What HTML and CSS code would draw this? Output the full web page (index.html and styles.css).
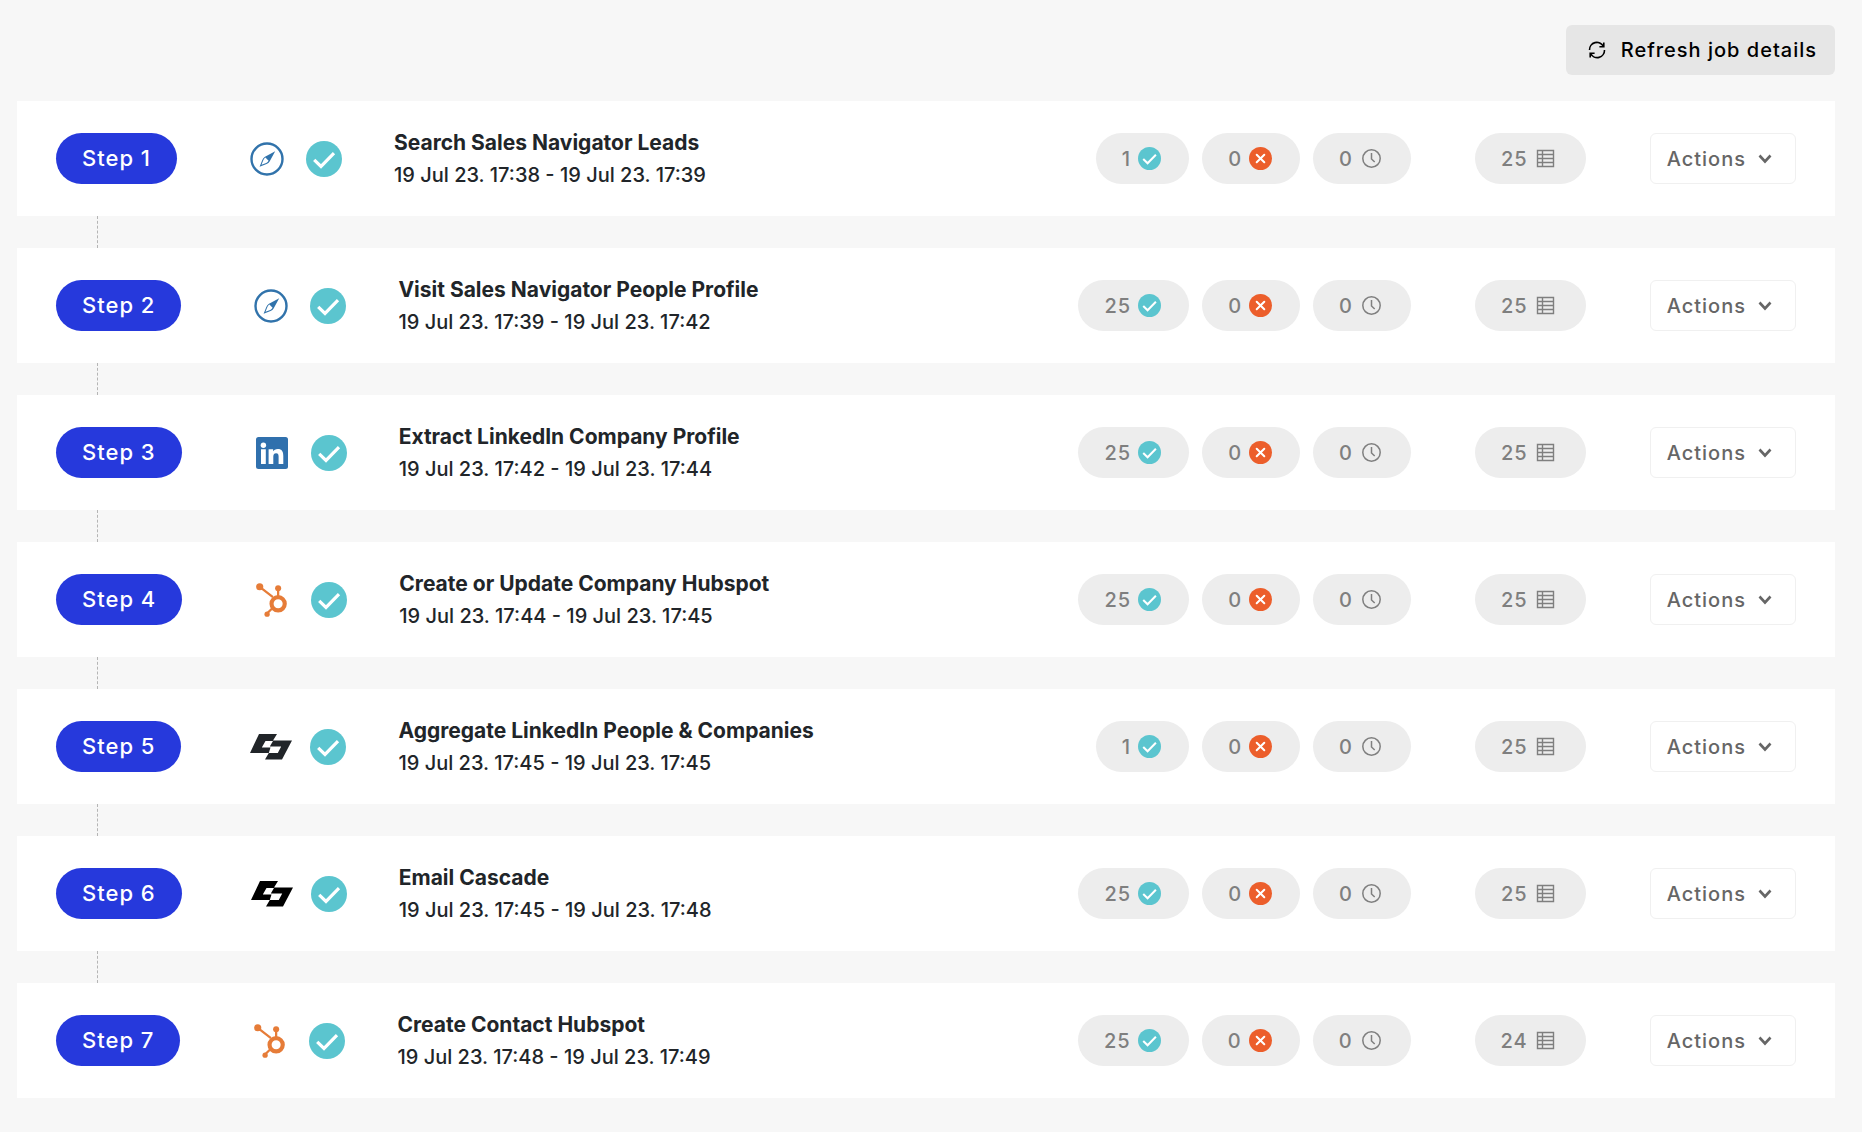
FILE: index.html
```html
<!DOCTYPE html>
<html lang="en">
<head>
  <meta charset="UTF-8">
  <meta name="viewport" content="width=device-width, initial-scale=1.0">
  <title>Job details</title>
  <link rel="stylesheet" href="styles.css">
</head>
<body>

  <!-- icons shared by all steps -->
  <svg class="sprite" aria-hidden="true">
    <symbol id="refresh" viewBox="0 0 18 18">
      <path d="M1.5 9a7.3 7.3 0 0 1 13.8-3.6M16.5 9A7.3 7.3 0 0 1 2.7 12.6M15.8 1.4v4.4h-4.4M2.2 16.6v-4.4h4.4" fill="none" stroke="currentColor" stroke-width="1.6"/>
    </symbol>
    <symbol id="compass" viewBox="0 0 34 34">
      <circle cx="17" cy="17" r="15.5" fill="none" stroke="#3173ab" stroke-width="2.4"/>
      <path fill="#3173ab" fill-rule="evenodd" d="M25.2 9.2 19.6 19.4Q18.6 21.2 16.6 22L9.6 24.8 12.2 18.2Q13 16 15 14.8ZM15.4 15.6Q13.8 16.6 13.2 18.4L11.5 22.8 16.2 20.9Q17.8 20.2 18.6 18.8Z"/>
    </symbol>
    <symbol id="linkedin" viewBox="0 0 34 34">
      <rect x="1" y="1" width="32" height="32" rx="2.5" fill="#3070ad"/>
      <g fill="#fff">
        <circle cx="8.4" cy="9.2" r="2.7"/>
        <path d="M6 13.3h4.8V28H6zM13.6 13.3h4.5v2c.8-1.4 2.4-2.4 4.6-2.4 4.4 0 5.6 2.7 5.6 7V28h-4.7v-7.2c0-2-.3-3.6-2.5-3.6s-2.8 1.6-2.8 3.6V28h-4.7z"/>
      </g>
    </symbol>
    <symbol id="hubspot" viewBox="0 0 34 36">
      <g stroke="#e67c38" fill="none">
        <path d="M4 4.2 18 15M23.5 6v9M17.6 26.5 12 32" stroke-width="2.4"/>
        <circle cx="23.5" cy="22" r="7" stroke-width="4.4"/>
      </g>
      <g fill="#e67c38">
        <circle cx="4" cy="4" r="3.8"/>
        <circle cx="23.5" cy="5.6" r="3.2"/>
        <circle cx="11.8" cy="33" r="2.8"/>
      </g>
    </symbol>
    <symbol id="cargo" viewBox="0 0 42 26">
      <path fill="currentColor" fill-rule="evenodd" d="M9 0H27L23 6.5H42L32 25.5H15L18.8 19H0ZM15.5 7 11.8 13.5H20.5L18.8 19H27.8L31.2 12.5H19.8L23 7Z"/>
    </symbol>
    <symbol id="check" viewBox="0 0 36 36">
      <circle cx="18" cy="18" r="18" fill="#5bc5cf"/>
      <path d="M8.2 18.8 15 25.4 28 12.2" fill="none" stroke="#fff" stroke-width="3.2"/>
    </symbol>
    <symbol id="fail" viewBox="0 0 23 23">
      <circle cx="11.5" cy="11.5" r="11.5" fill="#ec5e2b"/>
      <path d="m7.7 7.7 7.6 7.6m0-7.6-7.6 7.6" fill="none" stroke="#fff" stroke-width="2" stroke-linecap="round"/>
    </symbol>
    <symbol id="clock" viewBox="0 0 23 23">
      <path d="M11.5 6v6l3.2 3" fill="none" stroke="#7f7f7f" stroke-width="1.5"/>
      <circle cx="11.5" cy="11.5" r="8.7" fill="none" stroke="#7f7f7f" stroke-width="1.5"/>
    </symbol>
    <symbol id="rows" viewBox="0 0 23 23">
      <path d="M2.5 3.5h16v16h-16zM2.5 7.5h16M2.5 11.5h16M2.5 15.5h16M7.5 3.5v16" fill="none" stroke="#7f7f7f" stroke-width="1.4"/>
    </symbol>
    <symbol id="chevron" viewBox="0 0 14 10">
      <path d="m1.5 1.5 5.5 6 5.5-6" fill="none" stroke="currentColor" stroke-width="2.6"/>
    </symbol>
  </svg>

  <header class="toolbar">
    <button class="refresh" type="button"><svg><use href="#refresh"/></svg>Refresh job details</button>
  </header>

  <ol class="steps">
    <li>
      <div class="step">
        <span class="badge">Step 1</span>
        <svg class="app"><use href="#compass"/></svg>
        <svg class="status"><use href="#check"/></svg>
        <div class="info">
          <h2>Search Sales Navigator Leads</h2>
          <p>19 Jul 23. 17:38 - 19 Jul 23. 17:39</p>
        </div>
        <div class="counts">
          <span class="count">1<svg><use href="#check"/></svg></span>
          <span class="count">0<svg><use href="#fail"/></svg></span>
          <span class="count">0<svg><use href="#clock"/></svg></span>
        </div>
        <span class="count">25<svg><use href="#rows"/></svg></span>
        <button class="actions" type="button">Actions<svg><use href="#chevron"/></svg></button>
      </div>
    </li>
    <li>
      <div class="step">
        <span class="badge">Step 2</span>
        <svg class="app"><use href="#compass"/></svg>
        <svg class="status"><use href="#check"/></svg>
        <div class="info">
          <h2>Visit Sales Navigator People Profile</h2>
          <p>19 Jul 23. 17:39 - 19 Jul 23. 17:42</p>
        </div>
        <div class="counts">
          <span class="count">25<svg><use href="#check"/></svg></span>
          <span class="count">0<svg><use href="#fail"/></svg></span>
          <span class="count">0<svg><use href="#clock"/></svg></span>
        </div>
        <span class="count">25<svg><use href="#rows"/></svg></span>
        <button class="actions" type="button">Actions<svg><use href="#chevron"/></svg></button>
      </div>
    </li>
    <li>
      <div class="step">
        <span class="badge">Step 3</span>
        <svg class="app"><use href="#linkedin"/></svg>
        <svg class="status"><use href="#check"/></svg>
        <div class="info">
          <h2>Extract LinkedIn Company Profile</h2>
          <p>19 Jul 23. 17:42 - 19 Jul 23. 17:44</p>
        </div>
        <div class="counts">
          <span class="count">25<svg><use href="#check"/></svg></span>
          <span class="count">0<svg><use href="#fail"/></svg></span>
          <span class="count">0<svg><use href="#clock"/></svg></span>
        </div>
        <span class="count">25<svg><use href="#rows"/></svg></span>
        <button class="actions" type="button">Actions<svg><use href="#chevron"/></svg></button>
      </div>
    </li>
    <li>
      <div class="step">
        <span class="badge">Step 4</span>
        <svg class="app"><use href="#hubspot"/></svg>
        <svg class="status"><use href="#check"/></svg>
        <div class="info">
          <h2>Create or Update Company Hubspot</h2>
          <p>19 Jul 23. 17:44 - 19 Jul 23. 17:45</p>
        </div>
        <div class="counts">
          <span class="count">25<svg><use href="#check"/></svg></span>
          <span class="count">0<svg><use href="#fail"/></svg></span>
          <span class="count">0<svg><use href="#clock"/></svg></span>
        </div>
        <span class="count">25<svg><use href="#rows"/></svg></span>
        <button class="actions" type="button">Actions<svg><use href="#chevron"/></svg></button>
      </div>
    </li>
    <li>
      <div class="step">
        <span class="badge">Step 5</span>
        <svg class="app wide"><use href="#cargo"/></svg>
        <svg class="status"><use href="#check"/></svg>
        <div class="info">
          <h2>Aggregate LinkedIn People &amp; Companies</h2>
          <p>19 Jul 23. 17:45 - 19 Jul 23. 17:45</p>
        </div>
        <div class="counts">
          <span class="count">1<svg><use href="#check"/></svg></span>
          <span class="count">0<svg><use href="#fail"/></svg></span>
          <span class="count">0<svg><use href="#clock"/></svg></span>
        </div>
        <span class="count">25<svg><use href="#rows"/></svg></span>
        <button class="actions" type="button">Actions<svg><use href="#chevron"/></svg></button>
      </div>
    </li>
    <li>
      <div class="step">
        <span class="badge">Step 6</span>
        <svg class="app wide black"><use href="#cargo"/></svg>
        <svg class="status"><use href="#check"/></svg>
        <div class="info">
          <h2>Email Cascade</h2>
          <p>19 Jul 23. 17:45 - 19 Jul 23. 17:48</p>
        </div>
        <div class="counts">
          <span class="count">25<svg><use href="#check"/></svg></span>
          <span class="count">0<svg><use href="#fail"/></svg></span>
          <span class="count">0<svg><use href="#clock"/></svg></span>
        </div>
        <span class="count">25<svg><use href="#rows"/></svg></span>
        <button class="actions" type="button">Actions<svg><use href="#chevron"/></svg></button>
      </div>
    </li>
    <li>
      <div class="step">
        <span class="badge">Step 7</span>
        <svg class="app"><use href="#hubspot"/></svg>
        <svg class="status"><use href="#check"/></svg>
        <div class="info">
          <h2>Create Contact Hubspot</h2>
          <p>19 Jul 23. 17:48 - 19 Jul 23. 17:49</p>
        </div>
        <div class="counts">
          <span class="count">25<svg><use href="#check"/></svg></span>
          <span class="count">0<svg><use href="#fail"/></svg></span>
          <span class="count">0<svg><use href="#clock"/></svg></span>
        </div>
        <span class="count">24<svg><use href="#rows"/></svg></span>
        <button class="actions" type="button">Actions<svg><use href="#chevron"/></svg></button>
      </div>
    </li>
  </ol>

</body>
</html>
```
FILE: styles.css
```css
* {
  box-sizing: border-box;
}

body {
  margin: 0;
  padding: 25px 27px 32px 17px;
  background-color: #f7f7f7;
  color: #212529;
  font-family: Inter, 'Liberation Sans', sans-serif;
  font-size: 20px;
  font-weight: 500;
}

.sprite {
  display: none;
}

svg {
  flex-shrink: 0;
}

button {
  font: inherit;
  letter-spacing: 1px;
  border-radius: 6px;
  cursor: pointer;
}

.toolbar {
  display: flex;
  justify-content: flex-end;
  margin-bottom: 26px;
}

.refresh {
  display: flex;
  align-items: center;
  gap: 15px;
  height: 50px;
  padding: 0 18px 0 22px;
  border: none;
  background-color: #e6e6e6;
  color: #000;
}

.refresh svg {
  width: 18px;
  height: 18px;
}

.steps {
  list-style: none;
  margin: 0;
  padding: 0;
}

/* dashed line between two steps */
.steps li + li::before {
  content: '';
  display: block;
  height: 32px;
  margin-left: 80px;
  border-left: 1px dashed #b5b5b5;
}

.step {
  display: flex;
  align-items: center;
  min-height: 115px;
  padding: 0 39px;
  background-color: #fff;
}

.badge {
  height: 51px;
  padding: 0 26px;
  border-radius: 26px;
  background-color: #2639dc;
  color: #fff;
  font-size: 22px;
  letter-spacing: 1px;
  line-height: 51px;
}

.app {
  width: 42px;
  height: 34px;
  margin: 0 18px 0 69px;
}

.app.wide {
  height: 26px;
}

.app.black {
  color: #000;
}

.status {
  width: 36px;
  height: 36px;
}

.info {
  flex: 1;
  margin-left: 52px;
}

.info h2,
.info p {
  margin: 0;
  line-height: 32px;
}

.info h2 {
  font-size: 21px;
  font-weight: 700;
}

.counts {
  display: flex;
  gap: 13px;
}

.count {
  display: flex;
  align-items: center;
  gap: 7px;
  height: 51px;
  padding: 0 28px 0 26px;
  border-radius: 26px;
  background-color: #ededed;
  color: #7f7f7f;
  letter-spacing: 1px;
}

.count svg {
  width: 23px;
  height: 23px;
}

.counts + .count,
.actions {
  margin-left: 64px;
}

.actions {
  display: flex;
  align-items: center;
  gap: 12px;
  height: 51px;
  padding: 0 23px 0 16px;
  border: 1px solid #f0f0f0;
  background-color: #fff;
  color: #666;
}

.actions svg {
  width: 14px;
  height: 10px;
}
```
